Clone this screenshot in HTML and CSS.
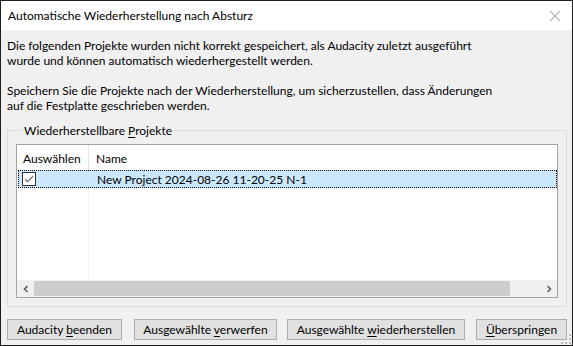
FILE: index.html
```html
<!DOCTYPE html>
<html lang="de">
<head>
<meta charset="utf-8">
<title>Automatische Wiederherstellung nach Absturz</title>
<link rel="stylesheet" href="styles.css">
</head>
<body>
<div class="window">
  <div class="titlebar">
    <span class="title">Automatische Wiederherstellung nach Absturz</span>
    <svg class="close" width="12" height="12" viewBox="0 0 12 12"><path d="M1 1L11 11M11 1L1 11" stroke="#b4b4b4" stroke-width="1.1" fill="none"/></svg>
  </div>
  <div class="content">
    <p class="msg">Die folgenden Projekte wurden nicht korrekt gespeichert, als Audacity zuletzt ausgeführt<br>wurde und können automatisch wiederhergestellt werden.</p>
    <p class="msg second">Speichern Sie die Projekte nach der Wiederherstellung, um sicherzustellen, dass Änderungen<br>auf die Festplatte geschrieben werden.</p>
    <fieldset class="group">
      <legend>Wiederherstellbare <u>P</u>rojekte</legend>
      <div class="list">
        <div class="header">
          <div class="col1 hcell">Auswählen</div>
          <div class="col2 hcell">Name</div>
        </div>
        <div class="rows">
          <div class="row selected">
            <div class="col1 cell">
              <svg class="check" width="14" height="14" viewBox="0 0 14 14"><rect x="0.5" y="0.5" width="13" height="13" fill="#fff" stroke="#333"/><path d="M3 7.2L5.6 9.6L11 4.2" stroke="#6d6d6d" stroke-width="1.2" fill="none"/></svg>
            </div>
            <div class="col2 cell">New Project 2024-08-26 11-20-25 N-1</div>
          </div>
          <div class="filler">
            <div class="col1 fillcol"></div>
          </div>
        </div>
        <div class="hscroll">
          <div class="arrow"><svg width="8" height="8" viewBox="0 0 8 8"><path d="M5.5 1L2.5 4L5.5 7" stroke="#606060" stroke-width="1.6" fill="none"/></svg></div>
          <div class="thumb"></div>
          <div class="track"></div>
          <div class="arrow"><svg width="8" height="8" viewBox="0 0 8 8"><path d="M2.5 1L5.5 4L2.5 7" stroke="#606060" stroke-width="1.6" fill="none"/></svg></div>
        </div>
      </div>
    </fieldset>
    <div class="buttons">
      <button class="btn b1">Audacity <u>b</u>eenden</button>
      <button class="btn b2">Ausgewählte <u>v</u>erwerfen</button>
      <button class="btn b3">Ausgewählte <u>w</u>iederherstellen</button>
      <button class="btn b4"><u>Ü</u>berspringen</button>
    </div>
    <svg class="grip" width="10" height="10" viewBox="0 0 10 10">
      <rect x="8" y="0" width="2" height="2" fill="#bcbcbc"/>
      <rect x="4" y="4" width="2" height="2" fill="#bcbcbc"/>
      <rect x="8" y="4" width="2" height="2" fill="#bcbcbc"/>
      <rect x="0" y="8" width="2" height="2" fill="#bcbcbc"/>
      <rect x="4" y="8" width="2" height="2" fill="#bcbcbc"/>
      <rect x="8" y="8" width="2" height="2" fill="#bcbcbc"/>
    </svg>
  </div>
</div>
</body>
</html>
```
FILE: styles.css
```css
* { box-sizing: border-box; }
html, body { margin: 0; padding: 0; }
body {
  width: 573px;
  height: 346px;
  font-family: Lato, "Liberation Sans", Arial, sans-serif;
  font-size: 12px;
  color: #000;
  overflow: hidden;
}
u { text-decoration: underline; text-underline-offset: 2px; }
.window {
  width: 573px;
  height: 346px;
  border: 1px solid #1e1e1e;
  display: flex;
  flex-direction: column;
  background: #f0f0f0;
}
.titlebar {
  height: 29px;
  background: #fff;
  display: flex;
  align-items: center;
  justify-content: space-between;
  padding: 0 11px 0 7px;
  flex: none;
}
.title { font-size: 12px; line-height: 15px; }
.close { display: block; }
.content {
  flex: 1;
  display: flex;
  flex-direction: column;
  padding: 8px 5px 0 6px;
  position: relative;
}
.msg {
  margin: 0;
  line-height: 15px;
}
.msg.second { margin-top: 15px; }
.group {
  margin: 10px 0 0 0;
  padding: 6px 8px 8px 8px;
  border: 1px solid #dcdcdc;
  min-width: 0;
}
.group legend {
  padding: 0 2px;
  margin-left: 6px;
  line-height: 15px;
}
.list {
  height: 154px;
  border: 1px solid #a3a3a3;
  background: #fff;
  display: flex;
  flex-direction: column;
}
.header {
  height: 25px;
  display: flex;
  flex: none;
}
.col1 { width: 72px; flex: none; }
.col2 { flex: 1; }
.hcell {
  display: flex;
  align-items: center;
  line-height: 15px;
  padding-top: 1px;
}
.header .col1 {
  padding-left: 6px;
  border-right: 1px solid #e5e5e5;
}
.header .col2 { padding-left: 7px; }
.rows {
  flex: 1;
  display: flex;
  flex-direction: column;
  min-height: 0;
}
.row {
  height: 18px;
  display: flex;
  margin: 0 0 0 1px;
  flex: none;
}
.row.selected {
  background: #cce8ff;
  border: 1px dotted #000;
}
.row .col1 { width: 70px; padding-left: 3px; display: flex; align-items: center; }
.row .col2 { padding-left: 8px; display: flex; align-items: center; line-height: 15px; }
.check { display: block; }
.filler { flex: 1; display: flex; }
.fillcol { border-right: 1px solid #f1f1f1; }
.hscroll {
  height: 17px;
  flex: none;
  display: flex;
  background: #f0f0f0;
}
.arrow {
  width: 17px;
  flex: none;
  display: flex;
  align-items: center;
  justify-content: center;
}
.thumb {
  width: 476px;
  flex: none;
  background: #cdcdcd;
  margin: 1px 0;
}
.track { flex: 1; }
.buttons {
  display: flex;
  margin-top: 12px;
  padding-left: 0;
}
.btn {
  height: 21px;
  font-family: Lato, "Liberation Sans", Arial, sans-serif;
  font-size: 12px;
  color: #000;
  background: #e1e1e1;
  border: 1px solid #adadad;
  padding: 0;
  margin: 0;
  line-height: 15px;
}
.b1 { width: 115px; }
.b2 { width: 143px; margin-left: 12px; }
.b3 { width: 178px; margin-left: 10px; }
.b4 { width: 91px; margin-left: 11px; }
.grip {
  position: absolute;
  right: 1px;
  bottom: 1px;
}
```
